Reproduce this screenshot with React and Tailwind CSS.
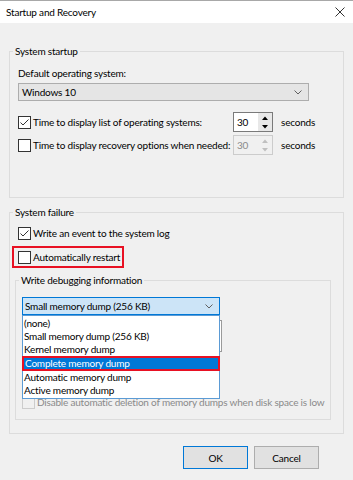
import React from "react";

const font = { fontFamily: 'Lato, "Noto Sans", sans-serif', letterSpacing: "-0.2px" };

function Check({ checked, disabled }) {
  return (
    <span
      className={[
        "flex h-[13px] w-[13px] shrink-0 items-center justify-center border",
        disabled ? "border-[#cccccc] bg-[#f0f0f0]" : "border-[#333333] bg-white",
      ].join(" ")}
    >
      {checked && (
        <svg width="11" height="11" viewBox="0 0 11 11">
          <polyline points="1.5,5.5 4,8 9.5,2.5" fill="none" stroke="#333" strokeWidth="1" />
        </svg>
      )}
    </span>
  );
}

function Chevron() {
  return (
    <svg width="8" height="5" viewBox="0 0 8 5">
      <polyline points="0.5,0.5 4,4 7.5,0.5" fill="none" stroke="#606060" strokeWidth="1" />
    </svg>
  );
}

function Spin({ disabled }) {
  const c = disabled ? "#bfbfbf" : "#000";
  return (
    <div
      className={[
        "flex h-[20px] w-[40px] shrink-0 border",
        disabled ? "border-[#cccccc] bg-[#f0f0f0] text-[#8a8a8a]" : "border-[#7a7a7a] bg-white text-black",
      ].join(" ")}
    >
      <span className="flex-1 pl-[3px] leading-[18px]">30</span>
      <div className="flex w-[14px] flex-col">
        <span className={["flex flex-1 items-center justify-center", disabled ? "" : "bg-[#e8e8e8]"].join(" ")}>
          <svg width="6" height="4" viewBox="0 0 6 4">
            <polygon points="0,4 3,0.5 6,4" fill={c} />
          </svg>
        </span>
        <span className={["flex flex-1 items-center justify-center", disabled ? "" : "bg-[#e8e8e8]"].join(" ")}>
          <svg width="6" height="4" viewBox="0 0 6 4">
            <polygon points="0,0 3,3.5 6,0" fill={c} />
          </svg>
        </span>
      </div>
    </div>
  );
}

function Group({ label, className, children }) {
  return (
    <div className={["relative border border-[#dcdcdc]", className].join(" ")}>
      <span className="absolute -top-[9px] left-[3px] bg-[#f0f0f0] px-[2px] leading-[16px]">{label}</span>
      {children}
    </div>
  );
}

const dumps = [
  "(none)",
  "Small memory dump (256 KB)",
  "Kernel memory dump",
  "Complete memory dump",
  "Automatic memory dump",
  "Active memory dump",
];

export default function App() {
  return (
    <div style={font} className="h-[480px] w-[353px] overflow-hidden whitespace-nowrap bg-[#f0f0f0] text-[10px] leading-[16px] text-black">
      {/* title bar */}
      <div className="flex h-[23px] items-center justify-between border-t border-[#a8a8a8] bg-white pl-[6px] pr-[8px]">
        <span>Startup and Recovery</span>
        <svg width="10" height="10" viewBox="0 0 10 10">
          <path d="M0.5 0.5 L9.5 9.5 M9.5 0.5 L0.5 9.5" stroke="#333" strokeWidth="1" />
        </svg>
      </div>

      <div className="px-[9px]">
        <Group label="System startup" className="mt-[28px] h-[147px] pl-[8px] pt-[13px]">
          <div>Default operating system:</div>
          <div className="mt-[2px] flex h-[18px] w-[291px] items-center justify-between border border-[#adadad] bg-[#e5e5e5] pl-[3px] pr-[6px]">
            <span>Windows 10</span>
            <Chevron />
          </div>
          <div className="mt-[11px] flex h-[20px] items-center">
            <div className="flex w-[215px] items-center gap-[2px]">
              <Check checked />
              <span>Time to display list of operating systems:</span>
            </div>
            <Spin />
            <span className="ml-[8px]">seconds</span>
          </div>
          <div className="mt-[3px] flex h-[20px] items-center">
            <div className="flex w-[215px] items-center gap-[2px]">
              <Check />
              <span>Time to display recovery options when needed:</span>
            </div>
            <Spin disabled />
            <span className="ml-[8px]">seconds</span>
          </div>
        </Group>

        <Group label="System failure" className="mt-[14px] h-[222px] pt-[12px]">
          <div className="flex h-[16px] items-center gap-[2px] pl-[8px]">
            <Check checked />
            <span>Write an event to the system log</span>
          </div>
          <div className="ml-[2px] mt-[5px] flex h-[22px] w-[112px] items-center gap-[2px] border-2 border-[#e81123] pl-[4px]">
            <Check />
            <span>Automatically restart</span>
          </div>

          <Group label="Write debugging information" className="ml-[5px] mt-[12px] h-[140px] w-[316px] pl-[6px] pt-[16px]">
            <div className="flex h-[18px] w-[198px] items-center justify-between border border-[#0078d7] bg-[#cce4f7] pl-[2px] pr-[6px]">
              <span>Small memory dump (256 KB)</span>
              <Chevron />
            </div>
            <div className="relative h-[79px] pt-[5px]">
              {/* dump file box, mostly hidden behind the open list */}
              <div className="h-[32px] w-[200px] border border-[#9a9a9a] bg-white" />
              {/* open dropdown list */}
              <div className="absolute left-0 top-0 w-[198px] border border-[#5b9bd5] bg-white py-[1px]">
                {dumps.map((d) =>
                  d === "Complete memory dump" ? (
                    <div key={d} className="-mx-[1px] border-2 border-[#e81123] bg-[#0078d7] pl-[1px] leading-[11px] text-white">
                      {d}
                    </div>
                  ) : (
                    <div key={d} className="h-[13px] pl-[1px] leading-[13px]">
                      {d}
                    </div>
                  )
                )}
              </div>
            </div>
            <div className="flex h-[16px] items-center gap-[2px] text-[#8a8a8a]">
              <Check disabled />
              <span>Disable automatic deletion of memory dumps when disk space is low</span>
            </div>
          </Group>
        </Group>

        <div className="mt-[12px] flex justify-end gap-[6px] pr-[25px]">
          <button className="h-[23px] w-[65px] border border-[#0078d7] bg-[#e1e1e1]">OK</button>
          <button className="h-[23px] w-[65px] border border-[#adadad] bg-[#e1e1e1]">Cancel</button>
        </div>
      </div>
    </div>
  );
}
